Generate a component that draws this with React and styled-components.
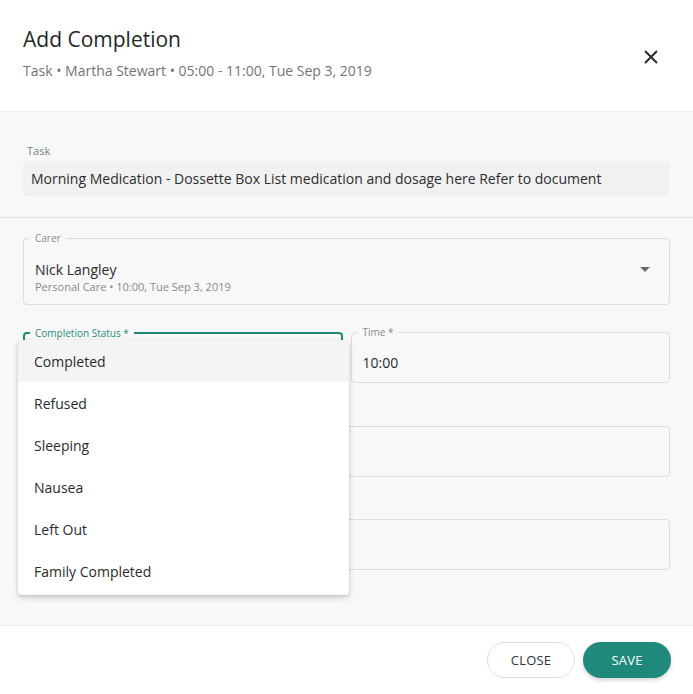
import styled, { createGlobalStyle } from "styled-components";

const GlobalStyle = createGlobalStyle`
  html, body {
    margin: 0;
    padding: 0;
    background: #ffffff;
    font-family: "Open Sans", "Liberation Sans", sans-serif;
    color: #2b2b2b;
  }
  * {
    box-sizing: border-box;
  }
`;

const TEAL = "#1f8a7b";

const Dialog = styled.div`
  width: 693px;
  height: 694px;
  display: flex;
  flex-direction: column;
  background: #ffffff;
`;

const Header = styled.div`
  height: 112px;
  display: flex;
  justify-content: space-between;
  align-items: flex-start;
  padding: 25px 22px 0 23px;
  border-bottom: 1px solid #ececec;
`;

const HeaderText = styled.div`
  display: flex;
  flex-direction: column;
  gap: 8px;
`;

const Title = styled.h1`
  margin: 0;
  font-size: 21px;
  font-weight: 400;
  line-height: 28px;
  color: #262626;
`;

const Subtitle = styled.div`
  font-size: 14px;
  line-height: 19px;
  color: #747474;
`;

const CloseIcon = styled.button`
  border: none;
  background: none;
  padding: 0;
  margin-top: 24px;
  margin-right: 12px;
  width: 16px;
  height: 16px;
  display: flex;
  align-items: center;
  justify-content: center;
  cursor: pointer;
`;

const Body = styled.div`
  flex: 1;
  background: #f8f8f8;
  display: flex;
  flex-direction: column;
`;

const TaskSection = styled.div`
  padding: 32px 23px 21px;
  border-bottom: 1px solid #e2e2e2;
  display: flex;
  flex-direction: column;
  gap: 3px;
`;

const TaskLabel = styled.div`
  font-size: 11px;
  line-height: 14px;
  color: #6d8390;
  padding-left: 4px;
`;

const TaskBox = styled.div`
  height: 35px;
  background: #f1f1f1;
  border-radius: 4px;
  padding: 0 8px;
  display: flex;
  align-items: center;
  font-size: 14px;
  color: #2d2d2d;
`;

const FormSection = styled.div`
  position: relative;
  flex: 1;
  padding: 20px 23px 0;
  display: flex;
  flex-direction: column;
`;

const Row = styled.div`
  display: flex;
  gap: 8px;
  margin-top: ${(p) => p.$top || 0}px;
`;

const Field = styled.div`
  position: relative;
  flex: 1;
  height: ${(p) => p.$height || 51}px;
  border: ${(p) => (p.$focused ? `2px solid ${TEAL}` : "1px solid #dcdcdc")};
  border-radius: 4px;
  padding: ${(p) => (p.$focused ? "9px 10px 0" : "9px 11px 0")};
  display: flex;
  flex-direction: column;
  justify-content: center;
`;

const FieldLabel = styled.span`
  position: absolute;
  top: -8px;
  left: ${(p) => (p.$focused ? "5px" : "6px")};
  padding: 0 5px;
  background: #f8f8f8;
  font-size: 10px;
  line-height: 14px;
  color: ${(p) => (p.$focused ? TEAL : "#8a8a8a")};
`;

const Value = styled.div`
  font-size: 14px;
  line-height: 19px;
  color: #2b2b2b;
`;

const SubValue = styled.div`
  font-size: 11px;
  line-height: 16px;
  color: #888888;
`;

const SelectRow = styled.div`
  display: flex;
  align-items: center;
  justify-content: space-between;
  padding-top: 2px;
`;

const Caret = styled.span`
  width: 0;
  height: 0;
  border-left: 5px solid transparent;
  border-right: 5px solid transparent;
  border-top: 5px solid #6a6a6a;
  margin-right: 8px;
  margin-top: -16px;
`;

const Menu = styled.ul`
  position: absolute;
  top: 122px;
  left: 18px;
  width: 331px;
  margin: 0;
  padding: 0 0 3px;
  list-style: none;
  background: #ffffff;
  border-radius: 4px;
  box-shadow: 0 3px 6px rgba(0, 0, 0, 0.16), 0 1px 3px rgba(0, 0, 0, 0.1);
  overflow: hidden;
`;

const MenuItem = styled.li`
  height: 42px;
  padding: 0 16px;
  display: flex;
  align-items: center;
  font-size: 14px;
  color: #2b2b2b;
  background: ${(p) => (p.$active ? "#f4f4f4" : "#ffffff")};
`;

const Footer = styled.div`
  height: 69px;
  border-top: 1px solid #ececec;
  display: flex;
  justify-content: flex-end;
  align-items: center;
  gap: 8px;
  padding: 0 22px 0 0;
`;

const Button = styled.button`
  width: 88px;
  height: 36px;
  border-radius: 18px;
  font-family: "Open Sans", "Liberation Sans", sans-serif;
  font-size: 13px;
  letter-spacing: 0.2px;
  text-transform: uppercase;
  cursor: pointer;
  border: ${(p) => (p.$primary ? "none" : "1px solid #dedede")};
  background: ${(p) => (p.$primary ? TEAL : "#ffffff")};
  color: ${(p) => (p.$primary ? "#ffffff" : "#333333")};
  box-shadow: ${(p) => (p.$primary ? "0 2px 4px rgba(0, 0, 0, 0.18)" : "none")};
`;

const statuses = [
  "Completed",
  "Refused",
  "Sleeping",
  "Nausea",
  "Left Out",
  "Family Completed",
];

export default function App() {
  return (
    <Dialog>
      <GlobalStyle />
      <Header>
        <HeaderText>
          <Title>Add Completion</Title>
          <Subtitle>Task • Martha Stewart • 05:00 - 11:00, Tue Sep 3, 2019</Subtitle>
        </HeaderText>
        <CloseIcon aria-label="Close">
          <svg width="14" height="14" viewBox="0 0 14 14">
            <path d="M1 1 L13 13 M13 1 L1 13" stroke="#2a2a2a" strokeWidth="2" />
          </svg>
        </CloseIcon>
      </Header>
      <Body>
        <TaskSection>
          <TaskLabel>Task</TaskLabel>
          <TaskBox>
            Morning Medication - Dossette Box List medication and dosage here Refer to document
          </TaskBox>
        </TaskSection>
        <FormSection>
          <Row>
            <Field $height={67}>
              <FieldLabel>Carer</FieldLabel>
              <SelectRow>
                <div>
                  <Value>Nick Langley</Value>
                  <SubValue>Personal Care • 10:00, Tue Sep 3, 2019</SubValue>
                </div>
                <Caret />
              </SelectRow>
            </Field>
          </Row>
          <Row $top={27}>
            <Field $focused>
              <FieldLabel $focused>Completion Status *</FieldLabel>
            </Field>
            <Field>
              <FieldLabel>Time *</FieldLabel>
              <Value>10:00</Value>
            </Field>
          </Row>
          <Row $top={43}>
            <Field />
          </Row>
          <Row $top={42}>
            <Field />
          </Row>
          <Menu>
            {statuses.map((s, i) => (
              <MenuItem key={s} $active={i === 0}>
                {s}
              </MenuItem>
            ))}
          </Menu>
        </FormSection>
      </Body>
      <Footer>
        <Button>Close</Button>
        <Button $primary>Save</Button>
      </Footer>
    </Dialog>
  );
}
